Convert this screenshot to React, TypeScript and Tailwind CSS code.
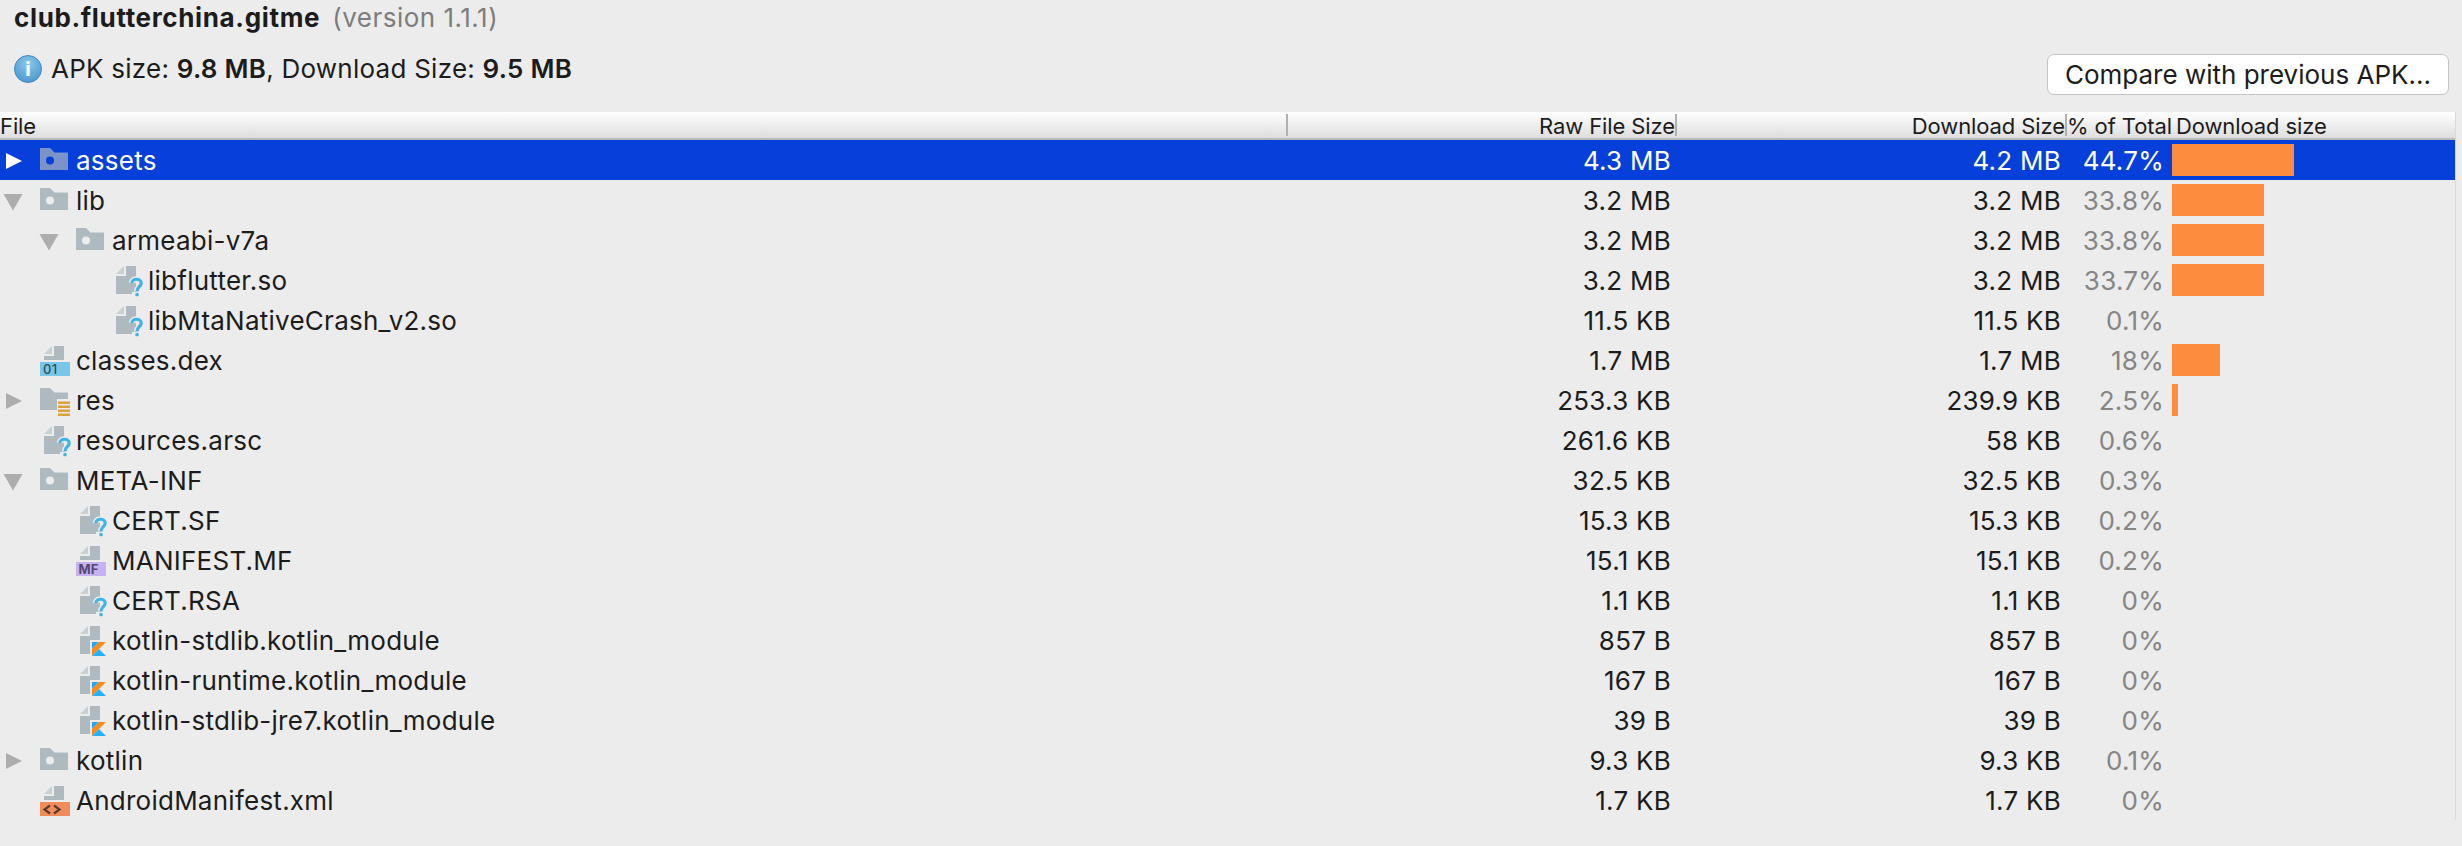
const F = "[font-family:Inter,'Liberation_Sans',sans-serif]";

type Kind = "folder" | "res" | "unknown" | "dex" | "mf" | "kotlin" | "xml";

type Row = {
  name: string;
  level: number;
  kind: Kind;
  arrow?: "right" | "down";
  raw: string;
  dl: string;
  pct: string;
  bar?: number;
};

const rows: Row[] = [
  { name: "assets", level: 0, kind: "folder", arrow: "right", raw: "4.3 MB", dl: "4.2 MB", pct: "44.7%", bar: 122 },
  { name: "lib", level: 0, kind: "folder", arrow: "down", raw: "3.2 MB", dl: "3.2 MB", pct: "33.8%", bar: 92 },
  { name: "armeabi-v7a", level: 1, kind: "folder", arrow: "down", raw: "3.2 MB", dl: "3.2 MB", pct: "33.8%", bar: 92 },
  { name: "libflutter.so", level: 2, kind: "unknown", raw: "3.2 MB", dl: "3.2 MB", pct: "33.7%", bar: 92 },
  { name: "libMtaNativeCrash_v2.so", level: 2, kind: "unknown", raw: "11.5 KB", dl: "11.5 KB", pct: "0.1%" },
  { name: "classes.dex", level: 0, kind: "dex", raw: "1.7 MB", dl: "1.7 MB", pct: "18%", bar: 48 },
  { name: "res", level: 0, kind: "res", arrow: "right", raw: "253.3 KB", dl: "239.9 KB", pct: "2.5%", bar: 6 },
  { name: "resources.arsc", level: 0, kind: "unknown", raw: "261.6 KB", dl: "58 KB", pct: "0.6%" },
  { name: "META-INF", level: 0, kind: "folder", arrow: "down", raw: "32.5 KB", dl: "32.5 KB", pct: "0.3%" },
  { name: "CERT.SF", level: 1, kind: "unknown", raw: "15.3 KB", dl: "15.3 KB", pct: "0.2%" },
  { name: "MANIFEST.MF", level: 1, kind: "mf", raw: "15.1 KB", dl: "15.1 KB", pct: "0.2%" },
  { name: "CERT.RSA", level: 1, kind: "unknown", raw: "1.1 KB", dl: "1.1 KB", pct: "0%" },
  { name: "kotlin-stdlib.kotlin_module", level: 1, kind: "kotlin", raw: "857 B", dl: "857 B", pct: "0%" },
  { name: "kotlin-runtime.kotlin_module", level: 1, kind: "kotlin", raw: "167 B", dl: "167 B", pct: "0%" },
  { name: "kotlin-stdlib-jre7.kotlin_module", level: 1, kind: "kotlin", raw: "39 B", dl: "39 B", pct: "0%" },
  { name: "kotlin", level: 0, kind: "folder", arrow: "right", raw: "9.3 KB", dl: "9.3 KB", pct: "0.1%" },
  { name: "AndroidManifest.xml", level: 0, kind: "xml", raw: "1.7 KB", dl: "1.7 KB", pct: "0%" },
];

const BG = "#ececec";
const GREY = "#aeb9c0";
const FOLD = "#c9d0d4";
const QUESTION = "M19.8 23C20 18 29.2 18 29.2 23C29.2 27 25 26.5 25 31.5";

function Sheet({ h = 34 }: { h?: number }) {
  return (
    <>
      <path d="M12 6V14H4Z" fill={FOLD} />
      <path d={`M14 6H24V${h}H4V16H14Z`} fill={GREY} />
    </>
  );
}

function FileIcon({ kind, selected }: { kind: Kind; selected: boolean }) {
  const folderFill = selected ? "#7c93c9" : GREY;
  const hole = selected ? "#063fda" : BG;
  return (
    <svg width="36" height="40" viewBox="0 0 36 40" className="shrink-0">
      {kind === "folder" && (
        <>
          <path d="M0 8H10L14.5 12.5H28V30H0Z" fill={folderFill} />
          <circle cx="10" cy="20.5" r="4" fill={hole} />
        </>
      )}
      {kind === "res" && (
        <>
          <path d="M0 8H10L14.5 12.5H28V19H17V30H0Z" fill={GREY} />
          <path d="M18 21.5H30V24H18ZM18 25.5H30V28H18ZM18 29.5H30V32H18ZM18 33.5H30V36H18Z" fill="#dda13c" />
        </>
      )}
      {kind === "unknown" && (
        <>
          <Sheet />
          <path d={QUESTION} fill="none" stroke={BG} strokeWidth="6" />
          <path d="M20 32H30V38H20Z" fill={BG} />
          <path d={QUESTION} fill="none" stroke="#3fb3e6" strokeWidth="3.2" />
          <rect x="23.3" y="33" width="3.4" height="3.2" rx="1.2" fill="#3fb3e6" />
        </>
      )}
      {kind === "dex" && (
        <>
          <Sheet h={20} />
          <rect x="0" y="22" width="30" height="14" fill="#79c6e6" />
          <text x="3" y="34" fontSize="13" fontFamily="Inter, sans-serif" fontWeight="500" fill="#2b4f60">01</text>
        </>
      )}
      {kind === "mf" && (
        <>
          <Sheet h={20} />
          <rect x="0" y="22" width="30" height="14" fill="#c6b2f2" />
          <text x="2.5" y="34" fontSize="13" fontFamily="Inter, sans-serif" fontWeight="700" fill="#54466e">MF</text>
        </>
      )}
      {kind === "xml" && (
        <>
          <Sheet h={20} />
          <rect x="0" y="22" width="30" height="14" fill="#f08b5c" />
          <path d="M10 25.5L4.5 29.5L10 33.5M14 25.5L19.5 29.5L14 33.5" fill="none" stroke="#5f3a2a" strokeWidth="2.2" />
        </>
      )}
      {kind === "kotlin" && (
        <>
          <Sheet />
          <path d="M14 20H32V38H14Z" fill={BG} />
          <path d="M16 22H23L16 29Z" fill="#27a7f2" />
          <path d="M23 22H30L16 36V29Z" fill="#f88a1f" />
          <path d="M23 29L30 36H16Z" fill="#27b0f5" />
        </>
      )}
    </svg>
  );
}

function Arrow({ dir, selected }: { dir?: "right" | "down"; selected: boolean }) {
  return (
    <span className="flex w-[40px] shrink-0 items-center">
      {dir && (
        <svg width="24" height="24" viewBox="0 0 24 24">
          {dir === "right" ? (
            <path d="M6 5L22 13L6 21Z" fill={selected ? "#ffffff" : "#adadad"} />
          ) : (
            <path d="M3.5 6H22.5L13 22.5Z" fill="#adadad" />
          )}
        </svg>
      )}
    </span>
  );
}

function TreeRow({ row, selected }: { row: Row; selected: boolean }) {
  return (
    <div className={`flex h-[40px] items-center ${selected ? "bg-[#063fda] text-white" : "text-[#1c1c1c]"}`}>
      <div className="flex w-[1288px] shrink-0 items-center" style={{ paddingLeft: row.level * 36 }}>
        <Arrow dir={row.arrow} selected={selected} />
        <FileIcon kind={row.kind} selected={selected} />
        <span className="whitespace-nowrap pt-[2px]">{row.name}</span>
      </div>
      <div className="w-[383px] shrink-0 pt-[2px] text-right">{row.raw}</div>
      <div className="w-[390px] shrink-0 pt-[2px] text-right">{row.dl}</div>
      <div className={`w-[103px] shrink-0 pt-[2px] text-right ${selected ? "text-white" : "text-[#858585]"}`}>{row.pct}</div>
      <div className="ml-[8px] flex h-[32px] items-center">
        {row.bar && <div className="h-[32px] bg-[#fe8c3e]" style={{ width: row.bar }} />}
      </div>
    </div>
  );
}

function Sep() {
  return <span className="h-[22px] w-[2px] shrink-0 bg-[#b0b0b0]" />;
}

export default function App() {
  return (
    <div className={`h-[846px] w-[2462px] overflow-hidden bg-[#ececec] text-[26px] leading-none tracking-[0.25px] text-[#1c1c1c] ${F}`}>
      <div className="h-[112px]">
        <div className="flex h-[36px] items-center gap-[12px] pl-[14px]">
          <span className="font-bold tracking-[0.65px]">club.flutterchina.gitme</span>
          <span className="tracking-[0.5px] text-[#7d7d7d]">(version 1.1.1)</span>
        </div>
        <div className="mt-[18px] flex items-start justify-between pr-[13px]">
          <div className="flex h-[30px] items-center gap-[9px] pl-[14px]">
            <span className="flex h-[28px] w-[28px] items-center justify-center rounded-full border border-[#3f86bd] bg-[radial-gradient(circle_at_50%_30%,#8cc8ec,#3d90ca)] text-[20px] font-bold text-white">
              i
            </span>
            <span>
              APK size: <b className="font-semibold">9.8 MB</b>, Download Size: <b className="font-semibold">9.5 MB</b>
            </span>
          </div>
          <button className="flex h-[41px] w-[402px] items-center justify-center rounded-[7px] border border-[#c4c4c4] bg-white tracking-normal text-[#1c1c1c]">
            Compare with previous APK...
          </button>
        </div>
      </div>
      <div className="w-[2456px] border-r border-[#d9d9d9]">
        <div className="flex h-[26px] items-center bg-gradient-to-b from-white to-[#dedede] text-[22px] leading-none tracking-[-0.1px]">
          <div className="flex h-full w-[1288px] shrink-0 items-center justify-between">
            <span className="pt-[2px]">File</span>
            <Sep />
          </div>
          <div className="flex h-full w-[389px] shrink-0 items-center justify-end">
            <span className="pt-[2px]">Raw File Size</span>
            <Sep />
          </div>
          <div className="flex h-full w-[390px] shrink-0 items-center justify-end">
            <span className="pt-[2px]">Download Size</span>
            <Sep />
          </div>
          <div className="w-[109px] shrink-0 whitespace-nowrap pt-[2px]">% of Total</div>
          <div className="whitespace-nowrap pt-[2px]">Download size</div>
        </div>
        <div className="h-[2px] bg-[#b9b9b9]" />
        {rows.map((row, i) => (
          <TreeRow key={row.name} row={row} selected={i === 0} />
        ))}
      </div>
    </div>
  );
}
